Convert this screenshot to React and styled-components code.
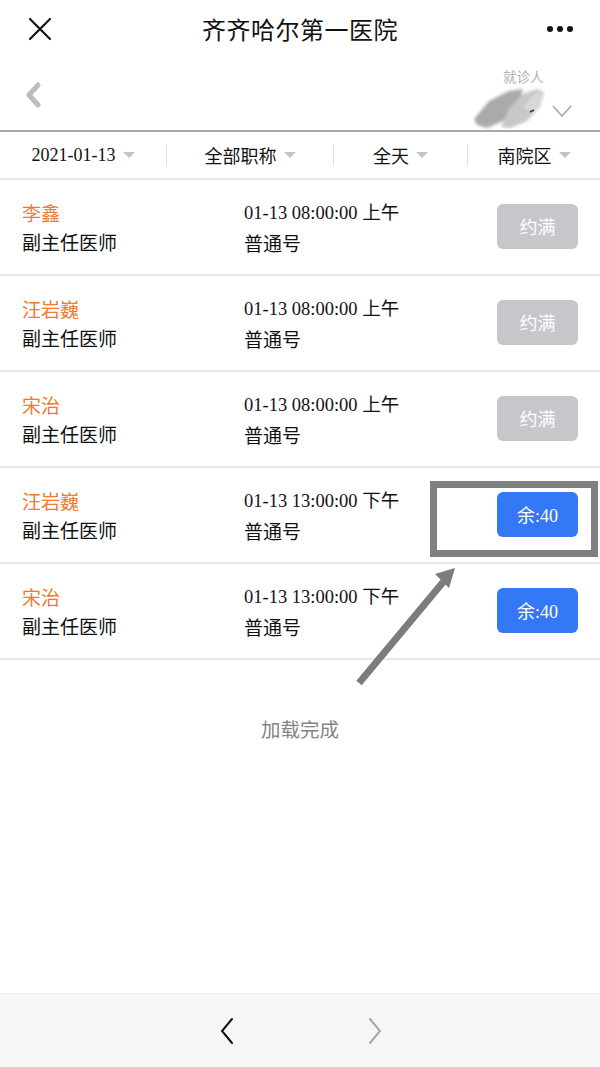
import React from "react";
import styled, { createGlobalStyle } from "styled-components";

const Global = createGlobalStyle`
  html, body { margin: 0; padding: 0; background: #fff; }
  body { font-family: "Noto Sans CJK SC", "Noto Sans", sans-serif; color: #111; }
  * { box-sizing: border-box; }
`;

const SERIF = `"Liberation Serif", "Noto Sans CJK SC", serif`;

const Page = styled.div`
  position: relative;
  width: 600px;
  min-height: 1067px;
  display: flex;
  flex-direction: column;
  background: #fff;
`;

const NavBar = styled.div`
  height: 60px;
  display: grid;
  grid-template-columns: 80px 1fr 80px;
  align-items: center;
  padding-bottom: 3px;
`;

const NavIcon = styled.div`
  display: flex;
  justify-content: ${(p) => p.$align || "center"};
  padding: ${(p) => p.$pad || "0"};
`;

const Title = styled.h1`
  margin: 0;
  text-align: center;
  font-size: 24px;
  font-weight: 400;
  letter-spacing: 0.5px;
  color: #111;
`;

const SubHeader = styled.div`
  height: 72px;
  border-bottom: 2px solid #a9a9a9;
  display: flex;
  align-items: center;
  justify-content: space-between;
  padding: 0 26px 0 24px;
`;

const Patient = styled.div`
  position: relative;
  width: 110px;
  height: 68px;
`;

const PatientLabel = styled.div`
  position: absolute;
  left: 39px;
  top: 5px;
  font-size: 13.5px;
  color: #b0b0b0;
`;

const Smear = styled.svg`
  position: absolute;
  left: 7px;
  top: 24px;
`;

const Chevron = styled.div`
  position: absolute;
  right: 2px;
  top: 37px;
`;

const FilterBar = styled.div`
  height: 48px;
  display: grid;
  grid-template-columns: 166px 167px 134px 1fr;
  align-items: center;
  border-bottom: 2px solid #e6e6e6;
`;

const FilterCell = styled.div`
  height: 22px;
  display: flex;
  align-items: center;
  justify-content: center;
  border-left: ${(p) => (p.$first ? "none" : "1px solid #e2e2e2")};
  font-size: 18px;
  font-family: ${(p) => (p.$serif ? SERIF : "inherit")};
  color: #111;
`;

const Caret = styled.span`
  display: inline-block;
  margin-left: 7px;
  width: 0;
  height: 0;
  border-left: 6px solid transparent;
  border-right: 6px solid transparent;
  border-top: 6px solid #c4c4c4;
`;

const List = styled.div`
  display: flex;
  flex-direction: column;
`;

const Row = styled.div`
  height: 96px;
  border-bottom: 2px solid #e8e8e8;
  display: grid;
  grid-template-columns: 222px 1fr auto;
  align-items: center;
  padding: 0 22px;
`;

const Col = styled.div`
  display: flex;
  flex-direction: column;
  line-height: 29px;
  margin-top: -1px;
`;

const DoctorName = styled.div`
  font-size: 19px;
  color: #f07a32;
`;

const Line = styled.div`
  font-size: 19px;
  color: #111;
`;

const TimeLine = styled.div`
  font-size: 18.5px;
  font-family: ${SERIF};
  color: #111;
`;

const Button = styled.button`
  width: 81px;
  height: 45px;
  border: none;
  border-radius: 6px;
  background: ${(p) => (p.$full ? "#c7c7cb" : "#3478f6")};
  color: #fff;
  font-size: 18px;
  font-family: ${(p) => (p.$full ? "inherit" : SERIF)};
  padding: 0;
  margin-top: -2px;
`;

const Done = styled.div`
  padding-top: 55px;
  text-align: center;
  font-size: 19.5px;
  line-height: 28px;
  color: #858585;
`;

const Spacer = styled.div`
  flex: 1;
`;

const BottomBar = styled.div`
  height: 74px;
  background: #f6f6f6;
  border-top: 1px solid #ececec;
  display: flex;
  align-items: center;
  justify-content: center;
  gap: 132px;
  padding-left: 2px;
`;

const Annotation = styled.div`
  position: absolute;
  left: 430px;
  top: 481px;
  width: 168px;
  height: 76px;
  border: 7px solid #808080;
  pointer-events: none;
`;

const ArrowSvg = styled.svg`
  position: absolute;
  left: 340px;
  top: 555px;
  pointer-events: none;
`;

const CN = styled.span`
  font-family: "Noto Sans CJK SC", sans-serif;
`;

const rows = [
  { name: "李鑫", time: "01-13 08:00:00", ap: "上午", full: true },
  { name: "汪岩巍", time: "01-13 08:00:00", ap: "上午", full: true },
  { name: "宋治", time: "01-13 08:00:00", ap: "上午", full: true },
  { name: "汪岩巍", time: "01-13 13:00:00", ap: "下午", full: false },
  { name: "宋治", time: "01-13 13:00:00", ap: "下午", full: false },
];

export default function App() {
  return (
    <>
      <Global />
      <Page>
        <NavBar>
          <NavIcon $align="flex-start" $pad="0 0 0 28px">
            <svg width="24" height="24" viewBox="0 0 24 24">
              <path d="M2 2 L22 22 M22 2 L2 22" stroke="#111" strokeWidth="2.2" strokeLinecap="round" />
            </svg>
          </NavIcon>
          <Title>齐齐哈尔第一医院</Title>
          <NavIcon $align="flex-end" $pad="0 26px 0 0">
            <svg width="28" height="8" viewBox="0 0 28 8">
              <circle cx="4" cy="4" r="3" fill="#111" />
              <circle cx="14" cy="4" r="3" fill="#111" />
              <circle cx="24" cy="4" r="3" fill="#111" />
            </svg>
          </NavIcon>
        </NavBar>

        <SubHeader>
          <svg width="18" height="26" viewBox="0 0 18 26">
            <path d="M14 3 L5 13 L14 23" stroke="#bdbdbd" strokeWidth="5" fill="none" strokeLinecap="round" strokeLinejoin="round" />
          </svg>
          <Patient>
            <PatientLabel>就诊人</PatientLabel>
            <Smear width="80" height="46" viewBox="0 0 80 46">
              <defs>
                <filter id="smearBlur" x="-20%" y="-20%" width="140%" height="140%">
                  <feGaussianBlur stdDeviation="1.5" />
                </filter>
              </defs>
              <g filter="url(#smearBlur)">
                <polygon points="3,34 18,16 38,6 52,4 48,18 32,36 16,43 6,40" fill="#aaaaaa" />
                <polygon points="30,42 38,24 52,9 66,4 73,7 69,22 56,36 40,43" fill="#c8c8c8" />
                <polygon points="52,22 66,7 73,10 64,28" fill="#d9d9d9" />
              </g>
              <path d="M59 27 l4 -2" stroke="#333" strokeWidth="1.5" />
            </Smear>
            <Chevron>
              <svg width="20" height="12" viewBox="0 0 20 12">
                <path d="M1 1 L10 11 L19 1" stroke="#a8a8a8" strokeWidth="1.6" fill="none" />
              </svg>
            </Chevron>
          </Patient>
        </SubHeader>

        <FilterBar>
          <FilterCell $first $serif>2021-01-13<Caret /></FilterCell>
          <FilterCell>全部职称<Caret /></FilterCell>
          <FilterCell>全天<Caret /></FilterCell>
          <FilterCell>南院区<Caret /></FilterCell>
        </FilterBar>

        <List>
          {rows.map((r, i) => (
            <Row key={i}>
              <Col>
                <DoctorName>{r.name}</DoctorName>
                <Line>副主任医师</Line>
              </Col>
              <Col>
                <TimeLine>
                  {r.time} <CN>{r.ap}</CN>
                </TimeLine>
                <Line>普通号</Line>
              </Col>
              <Button $full={r.full}>
                {r.full ? "约满" : (<><CN>余</CN>:40</>)}
              </Button>
            </Row>
          ))}
        </List>

        <Done>加载完成</Done>
        <Spacer />

        <BottomBar>
          <svg width="16" height="28" viewBox="0 0 16 28">
            <path d="M13 2 L3 14 L13 26" stroke="#111" strokeWidth="2" fill="none" strokeLinecap="round" />
          </svg>
          <svg width="16" height="28" viewBox="0 0 16 28">
            <path d="M3 2 L13 14 L3 26" stroke="#a6a6a6" strokeWidth="2" fill="none" strokeLinecap="round" />
          </svg>
        </BottomBar>

        <Annotation />
        <ArrowSvg width="130" height="140" viewBox="0 0 130 140">
          <line x1="19" y1="128" x2="104" y2="26" stroke="#7c7c7c" strokeWidth="7" />
          <polygon points="115,13 95,19 109,33" fill="#7c7c7c" />
        </ArrowSvg>
      </Page>
    </>
  );
}
